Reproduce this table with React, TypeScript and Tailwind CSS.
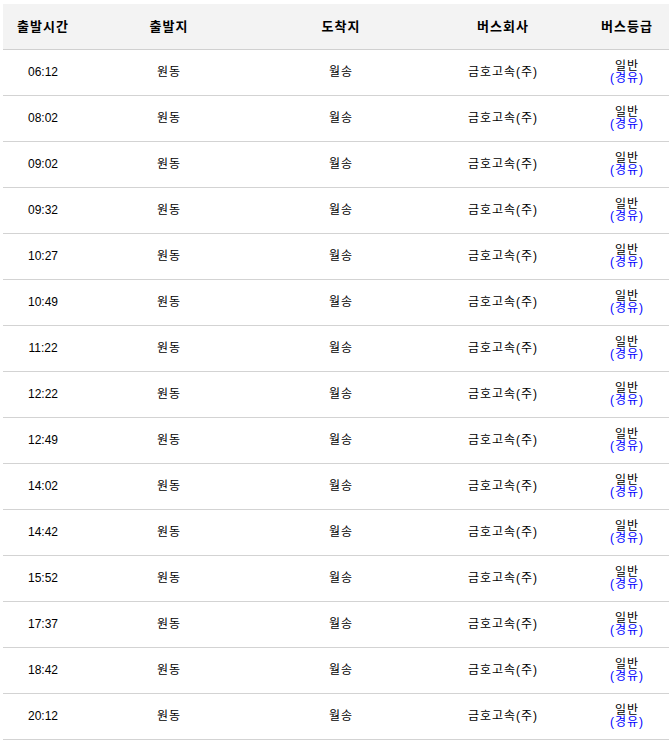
const times = [
  "06:12", "08:02", "09:02", "09:32", "10:27", "10:49", "11:22", "12:22",
  "12:49", "14:02", "14:42", "15:52", "17:37", "18:42", "20:12",
];

const font = { fontFamily: '"Liberation Sans", "Noto Sans CJK KR", sans-serif' };

export default function App() {
  return (
    <div className="overflow-hidden bg-white pt-1 pl-[3px]" style={font}>
      <table className="w-[672px] table-fixed border-collapse text-center text-black">
        <colgroup>
          <col className="w-[80px]" />
          <col className="w-[172px]" />
          <col className="w-[172px]" />
          <col className="w-[152px]" />
          <col className="w-[96px]" />
        </colgroup>
        <thead>
          <tr className="h-[45px] border-b border-[#d0d0d0] bg-[#f3f3f3] text-[13px] font-bold">
            <th className="p-0 tracking-[1px]">출발시간</th>
            <th className="p-0 tracking-[1px]">출발지</th>
            <th className="p-0 tracking-[1px]">도착지</th>
            <th className="p-0 tracking-[1px]">버스회사</th>
            <th className="p-0 tracking-[1px]">버스등급</th>
          </tr>
        </thead>
        <tbody className="text-[12px]">
          {times.map((t) => (
            <tr key={t} className="h-[46px] border-b border-[#d3d3d3]">
              <td className="p-0">{t}</td>
              <td className="p-0 tracking-[1px]">원동</td>
              <td className="p-0 tracking-[1px]">월송</td>
              <td className="p-0 tracking-[1px]">금호고속(주)</td>
              <td className="p-0 leading-[12px]">
                <div className="tracking-[1px]">일반</div>
                <div className="tracking-[1px] text-[#0000ff]">(경유)</div>
              </td>
            </tr>
          ))}
        </tbody>
      </table>
    </div>
  );
}
